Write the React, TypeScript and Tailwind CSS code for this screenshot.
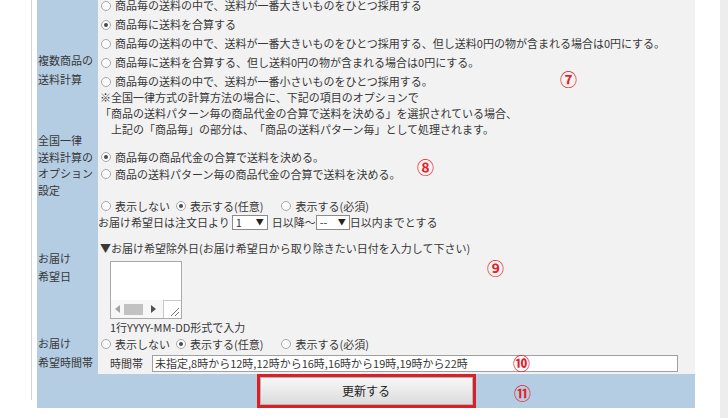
import React from "react";

const blue = "bg-[#b4cde3]";
const gray = "bg-[#f2f2f2]";

function Radio({ checked }: { checked?: boolean }) {
  return (
    <span className="mr-[4px] flex h-[10px] w-[10px] shrink-0 items-center justify-center rounded-full border border-[#a8a8a8] bg-[#fbfbfb]">
      {checked && <span className="h-[4px] w-[4px] rounded-full bg-[#4a4a4a]" />}
    </span>
  );
}

function RadioLine({ label, checked, h }: { label: string; checked?: boolean; h: string }) {
  return (
    <div className={`flex items-center pl-[3px] ${h}`}>
      <Radio checked={checked} />
      <span className="whitespace-nowrap">{label}</span>
    </div>
  );
}

// 表示しない / 表示する(任意) / 表示する(必須)
function ShowChoice() {
  return (
    <div className="flex items-center pl-[3px] whitespace-nowrap">
      <Radio />
      <span>表示しない</span>
      <span className="ml-[6px]" />
      <Radio checked />
      <span>表示する(任意)</span>
      <span className="ml-[18px]" />
      <Radio />
      <span>表示する(必須)</span>
    </div>
  );
}

function Select({ value, w }: { value: string; w: string }) {
  return (
    <span className={`flex h-[15px] items-center justify-between border border-[#8a8a8a] bg-white pl-[3px] pr-[3px] ${w}`}>
      <span className="leading-none">{value}</span>
      <span className="text-[8px] leading-none text-[#222]">▼</span>
    </span>
  );
}

function Mark({ n, pos }: { n: string; pos: string }) {
  return (
    <span className={`absolute text-[17px] font-bold leading-none text-[#e3202b] ${pos}`}>{n}</span>
  );
}

function TextArea() {
  return (
    <div className="ml-[12px] mt-[5px] flex h-[58px] w-[72px] flex-col border border-[#a9a9a9] bg-white">
      <div className="flex-1" />
      <div className="flex h-[18px]">
        <div className="flex flex-1 items-center bg-[#f7f7f7] px-[4px]">
          <svg width="5" height="8" viewBox="0 0 5 8">
            <path d="M5 0 L0 4 L5 8 Z" fill="#a3a3a3" />
          </svg>
          <span className="ml-[4px] h-[11px] w-[19px] bg-[#c2c2c2]" />
          <span className="flex-1" />
          <svg width="5" height="8" viewBox="0 0 5 8">
            <path d="M0 0 L5 4 L0 8 Z" fill="#505050" />
          </svg>
          <span className="w-[3px]" />
        </div>
        <div className="flex h-[18px] w-[18px] items-end justify-end border-l border-t border-[#c8c8c8] bg-white p-[2px]">
          <svg width="10" height="10" viewBox="0 0 10 10">
            <path d="M10 2 L2 10 M10 6 L6 10" stroke="#777" strokeWidth="1" />
          </svg>
        </div>
      </div>
    </div>
  );
}

export default function App() {
  return (
    <div className="relative flex h-[418px] w-[728px] overflow-hidden bg-white font-['Noto_Sans_CJK_JP','Noto_Sans',sans-serif] text-[11px] text-[#383838] [text-spacing-trim:space-all]">
      <div className="w-[31px] shrink-0" />
      <div className="h-[400px] w-px shrink-0 bg-[#d4d4d4]" />
      <div className="w-[5px] shrink-0" />

      <div className="flex w-[658px] shrink-0 flex-col">
        {/* 複数商品の送料計算 */}
        <div className="-mt-[4px] flex h-[140px]">
          <div className={`w-[61px] shrink-0 pl-[1px] pt-[55px] leading-[19px] ${blue}`}>
            複数商品の
            <br />
            送料計算
          </div>
          <div className={`flex-1 ${gray}`}>
            <RadioLine h="h-[19px]" label="商品毎の送料の中で、送料が一番大きいものをひとつ採用する" />
            <RadioLine h="h-[19px]" checked label="商品毎に送料を合算する" />
            <RadioLine h="h-[19px]" label="商品毎の送料の中で、送料が一番大きいものをひとつ採用する、但し送料0円の物が含まれる場合は0円にする。" />
            <RadioLine h="h-[19px]" label="商品毎に送料を合算する、但し送料0円の物が含まれる場合は0円にする。" />
            <RadioLine h="h-[19px]" label="商品毎の送料の中で、送料が一番小さいものをひとつ採用する。" />
            <div className="-mt-[2px] whitespace-nowrap pl-[2px] leading-[16px]">
              <div>※全国一律方式の計算方法の場合に、下記の項目のオプションで</div>
              <div>「商品の送料パターン毎の商品代金の合算で送料を決める」を選択されている場合、</div>
              <div>　上記の「商品毎」の部分は、「商品の送料パターン毎」として処理されます。</div>
            </div>
          </div>
        </div>

        {/* 全国一律送料計算のオプション設定 */}
        <div className="flex h-[62px]">
          <div className={`flex w-[61px] shrink-0 items-center pl-[1px] ${blue}`}>
            <div className="mb-[4px] leading-[16.5px]">
              全国一律
              <br />
              送料計算の
              <br />
              オプション
              <br />
              設定
            </div>
          </div>
          <div className={`flex flex-1 flex-col justify-center ${gray}`}>
            <div className="mb-[3px]">
              <RadioLine h="h-[17px]" checked label="商品毎の商品代金の合算で送料を決める。" />
              <RadioLine h="h-[17px]" label="商品の送料パターン毎の商品代金の合算で送料を決める。" />
            </div>
          </div>
        </div>

        {/* お届け希望日 */}
        <div className="flex h-[137px]">
          <div className={`flex w-[61px] shrink-0 items-center pl-[1px] leading-[18px] ${blue}`}>
            <div>
              お届け
              <br />
              希望日
            </div>
          </div>
          <div className={`flex flex-1 flex-col ${gray}`}>
            <div className="flex h-[16px] items-center">
              <ShowChoice />
            </div>
            <div className="flex h-[16px] items-center whitespace-nowrap">
              <span>お届け希望日は注文日より</span>
              <span className="ml-[2px]" />
              <Select value="1" w="w-[36px]" />
              <span className="ml-[4px]">日以降～</span>
              <Select value="--" w="w-[34px]" />
              <span>日以内までとする</span>
            </div>
            <div className="mt-[10px] flex h-[16px] items-center whitespace-nowrap pl-[2px]">
              ▼お届け希望除外日(お届け希望日から取り除きたい日付を入力して下さい)
            </div>
            <TextArea />
            <div className="ml-[12px] flex h-[16px] items-center">1行YYYY-MM-DD形式で入力</div>
          </div>
        </div>

        {/* お届け希望時間帯 */}
        <div className="flex h-[39px]">
          <div className={`flex w-[61px] shrink-0 items-center pl-[1px] ${blue}`}>
            <div className="mb-[4px] whitespace-nowrap leading-[19px]">
              お届け
              <br />
              希望時間帯
            </div>
          </div>
          <div className={`flex flex-1 flex-col ${gray}`}>
            <div className="flex h-[18px] items-center">
              <ShowChoice />
            </div>
            <div className="flex h-[21px] items-center pl-[12px]">
              <span className="w-[42px] shrink-0">時間帯</span>
              <div className="flex h-[17px] w-[526px] items-center border border-[#a0a0a0] bg-white pl-[2px] whitespace-nowrap">
                未指定,8時から12時,12時から16時,16時から19時,19時から22時
              </div>
            </div>
          </div>
        </div>

        {/* 更新 */}
        <div className={`flex h-[34px] justify-center ${blue}`}>
          <div className="w-[219px] border-[3px] border-[#dc1f26] bg-white">
            <button className="flex h-full w-full items-center justify-center border border-[#b5b5b5] bg-gradient-to-b from-[#f7f7f7] to-[#dcdcdc] text-[12px] text-[#222]">
              更新する
            </button>
          </div>
        </div>
      </div>

      <div className="w-[25px] shrink-0" />
      <div className="w-[8px] shrink-0 bg-[#ededed]" />

      <Mark n="⑦" pos="left-[560px] top-[70px]" />
      <Mark n="⑧" pos="left-[417px] top-[158px]" />
      <Mark n="⑨" pos="left-[487px] top-[259px]" />
      <Mark n="⑩" pos="left-[513px] top-[354px]" />
      <Mark n="⑪" pos="left-[514px] top-[384px]" />
    </div>
  );
}
